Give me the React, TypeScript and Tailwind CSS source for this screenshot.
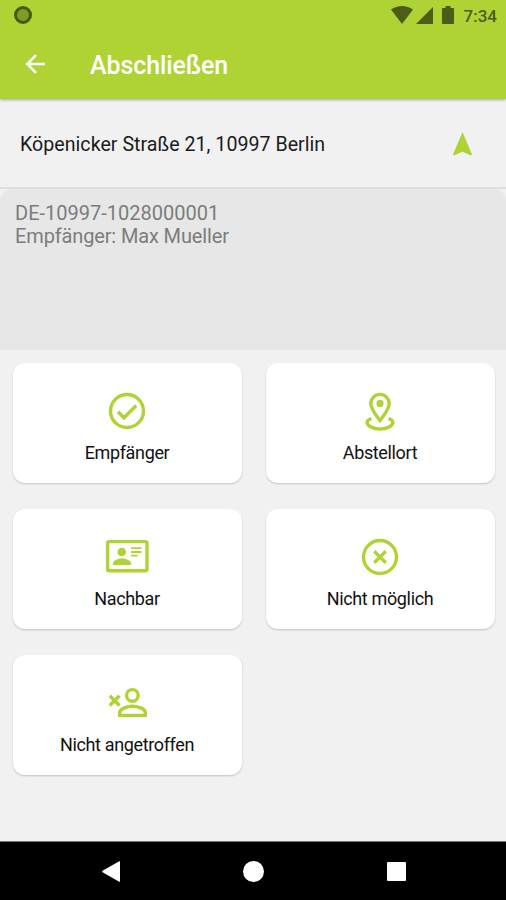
import type { ReactNode } from "react";

interface Action {
  label: string;
  icon: ReactNode;
}

const actions: Action[] = [
  {
    label: "Empfänger",
    icon: (
      <>
        <circle cx="22" cy="22" r="16.5" />
        <path d="m13 22.8 6 6 12.2-12.3" />
      </>
    ),
  },
  {
    label: "Abstellort",
    icon: (
      <>
        <path d="M22 31.5c-4.5-5.5-9.2-11.5-9.2-16.9a9.2 9.2 0 0 1 18.4 0c0 5.4-4.7 11.4-9.2 16.9Z" />
        <circle cx="22" cy="14.4" r="3.6" fill="currentColor" stroke="none" />
        <path d="M13.5 29.6c-2.7.9-4.4 2.2-4.4 3.6 0 3.8 5.8 6.9 12.9 6.9s12.9-3.1 12.9-6.9c0-1.4-1.7-2.7-4.4-3.6" />
      </>
    ),
  },
  {
    label: "Nachbar",
    icon: (
      <>
        <rect x="2.6" y="6.6" width="39.4" height="29.2" rx="1.6" />
        <circle cx="16.8" cy="17" r="4.3" fill="currentColor" stroke="none" />
        <path
          d="M8 30v-1.6c0-3.4 5.6-5 9-5s9 1.6 9 5V30Z"
          fill="currentColor"
          stroke="none"
        />
        <path d="M26 13.2h10.5M26 17h10.5M26 20.7h6.6" strokeWidth="1.8" />
      </>
    ),
  },
  {
    label: "Nicht möglich",
    icon: (
      <>
        <circle cx="22" cy="22" r="16.5" />
        <path d="m16.2 16.2 11.6 11.6m0-11.6L16.2 27.8" />
      </>
    ),
  },
  {
    label: "Nicht angetroffen",
    icon: (
      <>
        <circle cx="27.4" cy="14.4" r="5.8" />
        <path d="M14.7 34.4v-2.8c0-4.2 8.2-6.3 12.8-6.3s12.8 2.1 12.8 6.3v2.8Z" />
        <path d="m4.8 14.8 9.7 9.7m0-9.7-9.7 9.7" />
      </>
    ),
  },
];

function StatusBar() {
  return (
    <div className="flex h-8 items-center justify-between pl-3.5 pr-[9px] text-[#4d5d17]">
      <span className="mb-0.5 size-[18px] rounded-full border-[3px] border-[#435b0c] bg-[#7d9e25]" />
      <div className="flex items-center">
        <svg className="mb-0.5" width="22" height="18" viewBox="0 0 22 18" fill="currentColor">
          <path d="M0 3.6C6.5-1.1 15.5-1.1 22 3.6L11 18Z" />
        </svg>
        <svg className="mb-0.5 ml-[3px]" width="17" height="17" viewBox="0 0 17 17" fill="currentColor">
          <path d="M17 0v17H0Z" />
        </svg>
        <svg className="mb-0.5 ml-[9px]" width="12" height="18" viewBox="0 0 12 18" fill="currentColor">
          <path d="M3.5 0h5v2H11a1 1 0 0 1 1 1v14a1 1 0 0 1-1 1H1a1 1 0 0 1-1-1V3a1 1 0 0 1 1-1h2.5Z" />
        </svg>
        <span className="ml-2.5 text-[17px] font-medium leading-none">7:34</span>
      </div>
    </div>
  );
}

function Header() {
  return (
    <header className="relative h-[99px] bg-[#afd335] shadow-[0_1px_3px_rgba(0,0,0,0.3)]">
      <StatusBar />
      <div className="flex h-[67px] items-center pl-[25px] text-white">
        <svg
          className="mb-[3px]"
          width="20"
          height="20"
          viewBox="0 0 20 20"
          fill="none"
          stroke="currentColor"
          strokeWidth="2.5"
        >
          <path d="M20 10H2.5M11 1.2 2.2 10l8.8 8.8" />
        </svg>
        <h1 className="ml-[45px] text-[25px] font-medium leading-none tracking-[-0.1px]">
          Abschließen
        </h1>
      </div>
    </header>
  );
}

function ActionCard({ label, icon }: Action) {
  return (
    <button className="flex h-[120px] flex-col items-center rounded-xl bg-white pr-px pt-[26px] shadow-[0_1px_2px_rgba(0,0,0,0.2)]">
      <svg
        className="shrink-0 text-[#afd335]"
        width="44"
        height="44"
        viewBox="0 0 44 44"
        fill="none"
        stroke="currentColor"
        strokeWidth="3.4"
      >
        {icon}
      </svg>
      <span className="mt-2 text-[18px] leading-6 tracking-[-0.35px] text-[#111]">{label}</span>
    </button>
  );
}

export default function App() {
  return (
    <div className="flex h-[900px] w-[506px] flex-col overflow-hidden bg-[#f1f1f1] font-[Roboto,sans-serif]">
      <Header />

      {/* Address row */}
      <div className="flex h-[90px] items-center justify-between border-b-2 border-[#dedede] pl-5 pr-[34px] pt-px">
        <p className="pt-0.5 text-[19.6px] tracking-[0.03px] text-[#1b1b1b]">
          Köpenicker Straße 21, 10997 Berlin
        </p>
        <svg width="19" height="24" viewBox="0 0 19 24" fill="#afd335">
          <path d="M9.5 0 19 22.5l-.9.9-8.6-3.6L.9 23.4 0 22.5Z" />
        </svg>
      </div>

      {/* Parcel details */}
      <div className="h-[161px] rounded-t-xl bg-[#e7e7e7] px-[15px] pt-[13px] text-[20px] leading-[23px] text-[#7c7c7c]">
        <p>DE-10997-1028000001</p>
        <p className="tracking-[-0.14px]">Empfänger: Max Mueller</p>
      </div>

      <main className="grid flex-1 grid-cols-2 content-start gap-x-6 gap-y-[26px] pl-[13px] pr-[11px] pt-[13px]">
        {actions.map((action) => (
          <ActionCard key={action.label} {...action} />
        ))}
      </main>

      {/* Android navigation bar */}
      <nav className="flex h-[59px] items-center justify-between border-t border-[#777] bg-black pl-[102px] pr-[100px] text-white">
        <svg width="18" height="21" viewBox="0 0 18 21" fill="currentColor">
          <path d="M18 .8v19.4q0 .8-.8.5L.6 11.2q-.9-.7 0-1.4L17.2.3q.8-.3.8.5Z" />
        </svg>
        <span className="size-[21px] rounded-full bg-white" />
        <span className="size-[19px] rounded-[1px] bg-white" />
      </nav>
    </div>
  );
}
